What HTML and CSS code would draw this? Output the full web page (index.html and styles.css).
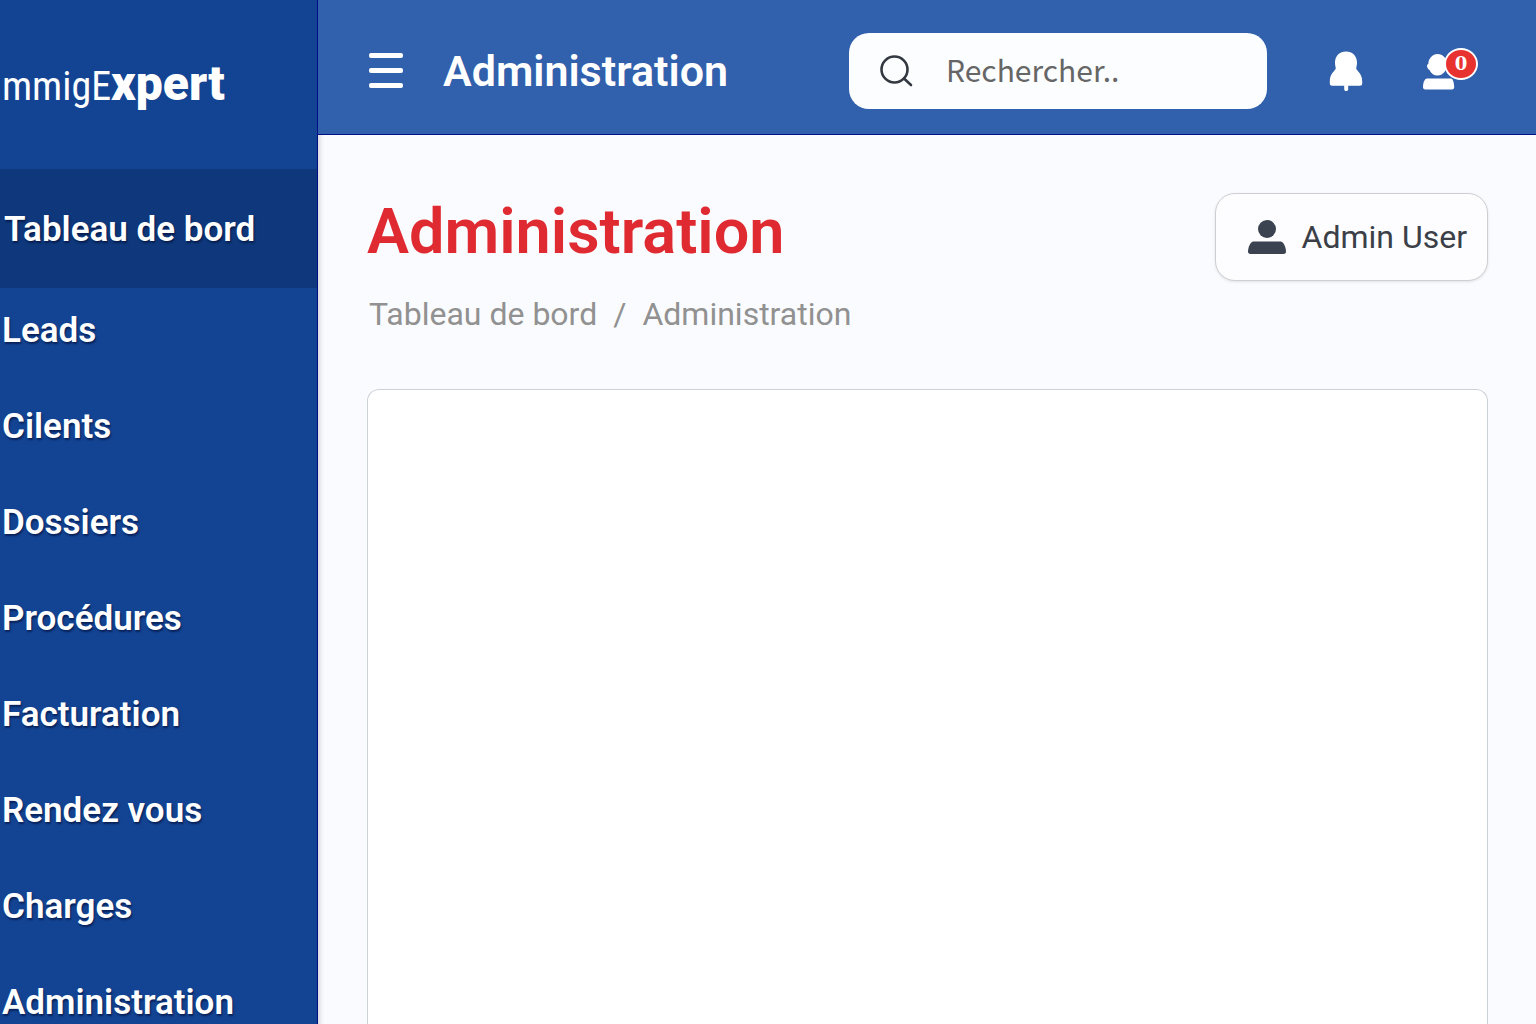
FILE: index.html
```html
<!DOCTYPE html>
<html lang="fr">
<head>
<meta charset="utf-8">
<meta name="viewport" content="width=device-width, initial-scale=1">
<title>Administration</title>
<link rel="stylesheet" href="styles.css">
</head>
<body>
<div class="app">
  <aside class="sidebar">
    <a class="brand" href="#"><span>mmigE</span><strong>xpert</strong></a>
    <nav class="nav" aria-label="Menu principal">
      <a class="nav-link nav-link-active" href="#">Tableau de bord</a>
      <a class="nav-link" href="#">Leads</a>
      <a class="nav-link" href="#">Cilents</a>
      <a class="nav-link" href="#">Dossiers</a>
      <a class="nav-link" href="#">Procédures</a>
      <a class="nav-link" href="#">Facturation</a>
      <a class="nav-link" href="#">Rendez vous</a>
      <a class="nav-link" href="#">Charges</a>
      <a class="nav-link" href="#">Administration</a>
    </nav>
  </aside>
  <div class="page">
    <header class="topbar">
      <button class="icon-button" type="button" aria-label="Menu">
        <svg width="34" height="36" viewBox="0 0 34 36" fill="#fff"><rect y="0" width="34" height="5" rx="2"/><rect y="15" width="34" height="5" rx="2"/><rect y="30" width="34" height="5" rx="2"/></svg>
      </button>
      <p class="topbar-title">Administration</p>
      <label class="search">
        <svg width="34" height="32" viewBox="0 0 34 32" fill="none" stroke="#343941" stroke-width="2.600" stroke-linecap="round"><circle cx="14.500" cy="14.500" r="13"/><path d="M24 23.500l7 6.500"/></svg>
        <input class="search-input" type="search" placeholder="Rechercher.." aria-label="Rechercher">
      </label>
      <div class="actions">
        <button class="icon-button" type="button" aria-label="Notifications">
          <svg width="34" height="40" viewBox="0 0 34 40" fill="#fff"><path d="M17 0.500C23.500.500 28 5 28 11.500c0 2.500-.5 4-.8 6 .3 2.300 6 4.500 6 13v2c0 1.500-1 2.200-2.200 2.200H19.200v3.500c0 1.200-.8 1.800-2 1.800s-2-.6-2-1.800v-3.500H3C1.600 34.700.800 33.900.800 32.500v-2c0-8.500 5.500-10.700 6-13C6.500 15.500 6 14 6 11.500 6 5 10.500.500 17 .500z"/></svg>
        </button>
        <button class="icon-button account" type="button" aria-label="Messages, 0">
          <svg width="34" height="38" viewBox="0 -2 34 38" fill="#fff"><path d="M14.500 0C20 0 24 4.500 24 10.500S20 21.500 14.500 21.500C10.500 21.500 8 19.500 6.500 16 5 15 4 13.500 4 12c0-1.200.5-1.500 1.300-2C5.500 4.500 9.500 0 14.500 0z"/><path d="M4 24.500h24c2 0 3 4.500 3.200 8.500 0 1.600-.7 2.500-2.200 2.500H2.200C.7 35.500 0 34.600 0 33c0-4 1.500-8.500 4-8.500z"/></svg>
          <span class="badge">0</span>
        </button>
      </div>
    </header>
    <main class="content">
      <div class="page-head">
        <div>
          <h1 class="page-title">Administration</h1>
          <nav class="crumbs" aria-label="Fil d'Ariane"><a href="#">Tableau de bord</a><span>/</span><span>Administration</span></nav>
        </div>
        <button class="user-button" type="button">
          <svg width="38" height="34" viewBox="0 0 38 34" fill="#3b4350"><circle cx="19" cy="9" r="9"/><path d="M5.500 21.500h27c3 0 5.500 6 5.500 10 0 1.500-.8 2.500-2.500 2.500h-33C.8 34 0 33 0 31.500c0-4 2.500-10 5.500-10z"/></svg>
          <span>Admin User</span>
        </button>
      </div>
      <section class="panel" aria-label="Contenu"></section>
    </main>
  </div>
</div>
</body>
</html>
```
FILE: styles.css
```css
* { box-sizing: border-box; }
html { scrollbar-width: none; }
body {
  margin: 0;
  font-family: Roboto, "Liberation Sans", sans-serif;
  color: #3b4048;
  background: #fafbfe;
}
a { color: inherit; text-decoration: none; }
button { font: inherit; color: inherit; cursor: pointer; }
svg { display: block; flex: none; }

.app { display: grid; grid-template-columns: 318px minmax(0, 1fr); min-height: 100vh; }
.sidebar {
  background: #134493;
  border-right: 1px solid #000f86;
  color: #fff;
  box-shadow: 1px 0 6px rgba(0, 0, 0, .2);
}
.brand { display: flex; align-items: baseline; height: 169px; padding: 58px 0 0 2px; font-size: 40px; line-height: 52px; }
.brand span { font-family: "Roboto Condensed", Roboto, sans-serif; }
.brand strong { font-size: 48px; font-weight: 900; }
.nav-link {
  display: flex;
  align-items: center;
  height: 96px;
  padding: 0 0 12px 2px;
  font-size: 35px;
  font-weight: 600;
  text-shadow: 1px 2px 2px rgba(0, 10, 50, .6);
}
.nav-link-active { height: 119px; padding: 2px 0 0 4px; background: #0e387b; }

.page { display: flex; flex-direction: column; }
.topbar {
  display: flex;
  align-items: center;
  height: 135px;
  padding: 8px 79px 0 51px;
  border-bottom: 1px solid #000f86;
  background: #3160ac;
  color: #fff;
}
.topbar-title { margin: 0 0 0 40px; font-size: 43px; font-weight: 600; }
.icon-button { padding: 0; border: 0; background: none; }
.search {
  display: flex;
  align-items: center;
  gap: 32px;
  width: 418px;
  height: 76px;
  margin-left: auto;
  padding: 0 31px;
  border-radius: 20px;
  background: #fcfdff;
}
.search-input { flex: 1; min-width: 0; padding: 0 0 4px; border: 0; outline: 0; background: none; font: 400 30px "Noto Sans CJK JP", sans-serif; }
.search-input::placeholder { color: #666; opacity: 1; }
.actions { display: flex; align-items: center; gap: 60px; margin-left: 62px; }
.account { position: relative; }
.badge {
  position: absolute;
  top: -4px;
  left: 21px;
  width: 34px;
  height: 32px;
  border: 2px solid #fff;
  border-radius: 50%;
  background: #e8322f;
  color: #fff;
  font: 700 18px/28px "DejaVu Serif", serif;
}
.content { display: flex; flex: 1; flex-direction: column; padding: 58px 48px 0 49px; }
.page-head { display: flex; justify-content: space-between; align-items: flex-start; height: 196px; }
.page-title { margin: 0; font-size: 63px; line-height: 78px; font-weight: 600; color: #df2a31; }
.crumbs { display: flex; gap: 16px; margin: 18px 0 0 2px; font-size: 32px; line-height: 50px; color: #919191; }
.user-button {
  display: flex;
  align-items: center;
  gap: 16px;
  height: 88px;
  padding: 0 20px 0 32px;
  border: 1px solid #cfcfd3;
  border-radius: 20px;
  background: #fdfdff;
  box-shadow: 0 1px 3px rgba(0, 0, 0, .1);
  font-size: 32px;
}
.panel { flex: 1; border: 1px solid #cdd2d6; border-bottom: 0; border-radius: 12px 12px 0 0; background: #fff; }
```
